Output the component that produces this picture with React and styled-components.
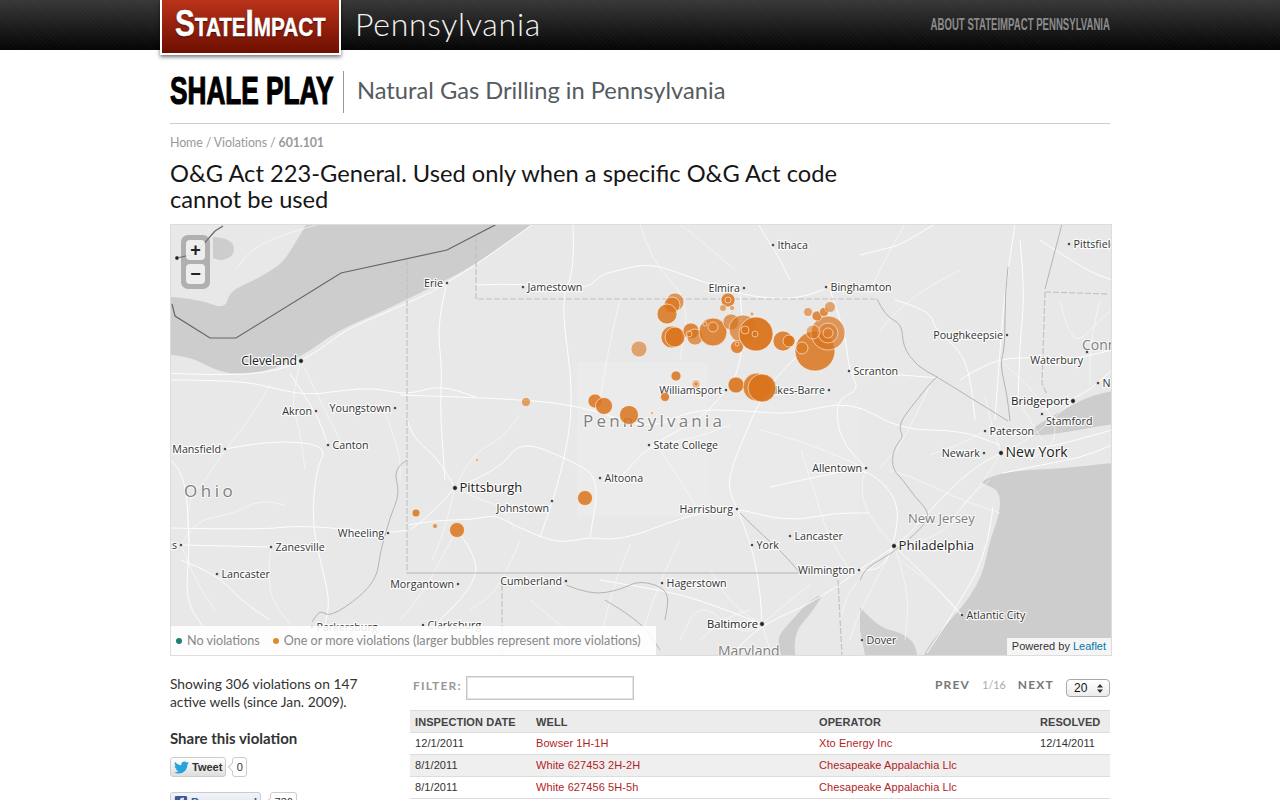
import React from 'react';
import styled, { createGlobalStyle } from 'styled-components';
import { FaTwitter, FaFacebookSquare } from 'react-icons/fa';

const GlobalStyle = createGlobalStyle`
  html, body {
    margin: 0;
    padding: 0;
    background: #fff;
    overflow: hidden;
  }
  body {
    font-family: Lato, "Open Sans", sans-serif;
    color: #333;
  }
  #root {
    height: 800px;
    overflow: hidden;
  }
`;

const TopBar = styled.header`
  height: 50px;
  background-color: #000;
  background-image:
    repeating-linear-gradient(45deg, rgba(255, 255, 255, 0.018) 0 1px, transparent 1px 3px),
    linear-gradient(#383838, #040404);
`;

const TopBarInner = styled.div`
  width: 950px;
  margin-left: 160px;
  display: flex;
  align-items: flex-start;
`;

const Logo = styled.a`
  display: block;
  box-sizing: border-box;
  width: 181px;
  height: 55px;
  border: 2px solid #fff;
  border-top: 0;
  background: linear-gradient(#bb321a, #6d0f00);
  box-shadow: 0 2px 4px rgba(0, 0, 0, 0.55);
  position: relative;
  z-index: 2;
  overflow: hidden;
`;

const LogoText = styled.span`
  display: block;
  margin: 6px 0 0 13px;
  font: bold 36px/36px "Liberation Sans", sans-serif;
  font-variant: small-caps;
  color: #fff;
  white-space: nowrap;
  transform: scaleX(0.825);
  transform-origin: left center;
  -webkit-text-stroke: 0.4px #fff;
  text-shadow: 0 1px 2px rgba(0, 0, 0, 0.6);
`;

const RegionName = styled.div`
  margin: 4px 0 0 14px;
  font: 300 32px/40px Lato, sans-serif;
  color: #f4f4f4;
  letter-spacing: 0.72px;
`;

const AboutLink = styled.a`
  margin: 16px 0 0 auto;
  font: bold 16px/18px "Liberation Sans", sans-serif;
  color: #8c8c8c;
  white-space: nowrap;
  transform: scaleX(0.6);
  transform-origin: right center;
`;

const Page = styled.main`
  width: 940px;
  margin: 0 auto;
`;

const TitleRow = styled.div`
  display: flex;
  align-items: center;
  height: 42px;
  padding: 21px 0 10px;
  border-bottom: 1px solid #ccc;
`;

const ShalePlay = styled.div`
  width: 173px;
  height: 42px;
  border-right: 1px solid #999;
  font: bold 39px/40px "Liberation Sans", sans-serif;
  color: #000;
  -webkit-text-stroke: 1.2px #000;
  white-space: nowrap;
`;

const ShalePlayText = styled.span`
  display: inline-block;
  transform: scaleX(0.672);
  transform-origin: left center;
`;

const Subtitle = styled.div`
  margin: 0 0 4px 13px;
  font: 400 23.7px/30px Lato, sans-serif;
  color: #555b60;
`;

const Breadcrumb = styled.nav`
  margin-top: 11px;
  font: 12.4px/16px Lato, sans-serif;
  letter-spacing: -0.1px;
  color: #999;
  b {
    font-weight: 700;
  }
`;

const Headline = styled.h1`
  margin: 9px 0 12px;
  width: 700px;
  font: 400 23.7px/26px Lato, sans-serif;
  color: #161616;
`;

const MapBox = styled.div`
  position: relative;
  box-sizing: border-box;
  width: 942px;
  height: 432px;
  border: 1px solid #ddd;
  overflow: hidden;
  background: #e8e8e8;
`;

const MapSvg = styled.svg`
  display: block;
  width: 940px;
  height: 430px;
`;

const Water = styled.path`
  fill: #cdcdcd;
`;

const Road = styled.path`
  fill: none;
  stroke: #fff;
  stroke-width: ${(p) => (p.$minor ? 0.7 : 1)};
  stroke-opacity: ${(p) => (p.$minor ? 0.75 : 0.9)};
`;

const Border = styled.path`
  fill: none;
  stroke: ${(p) => p.$color || '#b4b4b4'};
  stroke-width: ${(p) => p.$width || 1};
  stroke-dasharray: ${(p) => p.$dash || 'none'};
`;

const CityDot = styled.circle`
  fill: #222;
  stroke: #fff;
  stroke-width: 0.6;
`;

const CityLabel = styled.text`
  font-family: "Open Sans", sans-serif;
  font-size: ${(p) => p.$size}px;
  fill: ${(p) => (p.$size > 11 ? '#222' : '#333')};
  paint-order: stroke;
  stroke: rgba(255, 255, 255, 0.85);
  stroke-width: 2.4px;
  stroke-linejoin: round;
`;

const AreaLabel = styled.text`
  font-family: "Open Sans", sans-serif;
  font-size: ${(p) => p.$size}px;
  letter-spacing: ${(p) => p.$spacing || 0}px;
  fill: #808080;
  paint-order: stroke;
  stroke: rgba(255, 255, 255, 0.7);
  stroke-width: 2px;
`;

const Bubble = styled.circle`
  fill: #d9741c;
  fill-opacity: ${(p) => p.$fade || 0.85};
  stroke: #fff;
  stroke-opacity: 0.55;
  stroke-width: 1;
`;

const ZoomControl = styled.div`
  position: absolute;
  left: 10px;
  top: 10px;
  display: flex;
  flex-direction: column;
  gap: 4px;
  padding: 5px;
  background: rgba(120, 120, 120, 0.5);
  border-radius: 7px;
`;

const ZoomButton = styled.a`
  display: flex;
  align-items: center;
  justify-content: center;
  width: 19px;
  height: 20px;
  background: rgba(245, 245, 245, 0.9);
  border-radius: 4px;
  color: #222;
  font: bold 18px/18px "Liberation Sans", sans-serif;
`;

const Legend = styled.div`
  position: absolute;
  left: 0;
  bottom: 0;
  box-sizing: border-box;
  width: 485px;
  height: 29px;
  display: flex;
  align-items: center;
  padding-left: 5px;
  background: rgba(255, 255, 255, 0.88);
  font: 12.6px/16px Lato, sans-serif;
  color: #888;
`;

const LegendDot = styled.i`
  width: 6px;
  height: 6px;
  border-radius: 50%;
  margin: 0 5px 0 ${(p) => p.$gap || 0}px;
  background: ${(p) => p.$color};
`;

const Attribution = styled.div`
  position: absolute;
  right: 0;
  bottom: 0;
  height: 17px;
  padding: 0 5px;
  background: rgba(255, 255, 255, 0.8);
  font: 11px/17px "Liberation Sans", sans-serif;
  color: #333;
  a {
    color: #0078a8;
  }
`;

const Lower = styled.div`
  display: flex;
  margin-top: 20px;
`;

const Sidebar = styled.aside`
  width: 240px;
  flex: none;
  margin-top: -1px;
`;

const Summary = styled.p`
  margin: 0;
  width: 200px;
  font: 13.8px/18px Lato, sans-serif;
  color: #333;
`;

const ShareTitle = styled.h3`
  margin: 17px 0 9px;
  font: 700 15px/20px Lato, sans-serif;
  color: #333;
`;

const ShareRow = styled.div`
  display: flex;
  align-items: center;
  margin-bottom: 15px;
`;

const ShareButton = styled.a`
  display: flex;
  align-items: center;
  gap: 3px;
  box-sizing: border-box;
  height: 20px;
  padding: 0 3px;
  border: 1px solid #ccc;
  border-radius: 3px;
  background: ${(p) => (p.$fb ? 'linear-gradient(#f2f4f9, #d9dfea)' : 'linear-gradient(#fff, #dedede)')};
  color: ${(p) => (p.$fb ? '#3b5998' : '#333')};
  font: bold 11px/18px "Liberation Sans", sans-serif;
`;

const ShareCount = styled.span`
  position: relative;
  box-sizing: border-box;
  height: 20px;
  margin-left: ${(p) => p.$gap}px;
  padding: 0 3.5px;
  border: 1px solid #ccc;
  border-radius: 3px;
  background: #fff;
  font: 11px/18px "Liberation Sans", sans-serif;
  color: #333;
  &::before {
    content: '';
    position: absolute;
    left: -4px;
    top: 6px;
    width: 5px;
    height: 5px;
    background: #fff;
    border-left: 1px solid #ccc;
    border-bottom: 1px solid #ccc;
    transform: rotate(45deg);
  }
`;

const Results = styled.section`
  width: 700px;
`;

const ToolRow = styled.div`
  display: flex;
  align-items: flex-start;
  height: 24px;
  margin-bottom: 10px;
`;

const FilterLabel = styled.label`
  margin-left: 3px;
  font: 700 12px/20px Lato, sans-serif;
  letter-spacing: 1.2px;
  color: #999;
`;

const FilterInput = styled.input`
  box-sizing: border-box;
  width: 168px;
  height: 24px;
  margin-left: 4px;
  border: 1px solid #c6c6c6;
  box-shadow: inset 0 0 0 1px #e4e4e4;
  background: #fff;
  outline: 0;
`;

const Pager = styled.div`
  margin: 1px 0 0 auto;
  display: flex;
  align-items: flex-start;
  font: 700 12px/16px Lato, sans-serif;
  letter-spacing: 1.2px;
  color: #777;
`;

const PageCount = styled.span`
  margin: 0 12px;
  font-size: 10.8px;
  font-weight: 400;
  letter-spacing: 0;
  color: #aaa;
`;

const PageSize = styled.div`
  box-sizing: border-box;
  display: flex;
  align-items: center;
  justify-content: space-between;
  width: 44px;
  height: 18px;
  margin: 2px 0 0 12px;
  padding: 0 6px 0 7px;
  border: 1px solid #aaa;
  border-radius: 4px;
  background: linear-gradient(#fff, #ececec);
  font: 12px/16px "Liberation Sans", sans-serif;
  letter-spacing: 0;
  color: #111;
`;

const Table = styled.table`
  width: 700px;
  border-collapse: collapse;
  table-layout: fixed;
  font: 11px/14px "Liberation Sans", sans-serif;
  letter-spacing: 0.08px;
  color: #333;
`;

const Th = styled.th`
  box-sizing: border-box;
  width: ${(p) => p.$w}px;
  height: 22px;
  padding: 0 0 0 5px;
  background: #ececec;
  border-top: 1px solid #ddd;
  border-bottom: 1px solid #ddd;
  text-align: left;
  font-weight: bold;
  color: #444;
`;

const Tr = styled.tr`
  background: ${(p) => (p.$odd ? '#efefef' : '#fff')};
`;

const Td = styled.td`
  box-sizing: border-box;
  height: 22px;
  padding: 0 0 2px 5px;
  border-bottom: 1px solid #ddd;
  a {
    color: #b01e1e;
  }
`;

const WATER = [
  'M321 200 L560 200 L533 224 L510 240 L470 268 L420 293 L383 311 L337 331 L310 351 L280 367 L255 373 L227 374 L203 364 L190 357 L150 352 L150 296 L177 297 L203 301 L225 309 L230 291 L253 281 L277 267 L286 258 L297 240 Z',
  'M213 237 L232 238 L235 255 L222 261 L213 258 Z',
  'M1150 460 L1112 463 L1067 468 L1027 470 L1003 473 L985 479 L980 483 L1000 490 L1000 513 L990 540 L983 573 L970 597 L953 617 L927 647 L920 665 L900 700 L1150 700 Z',
  'M860 607 L877 627 L903 633 L918 647 L917 680 L870 680 L860 630 Z',
  'M1150 385 L1112 391 L1087 397 L1060 412 L1033 427 L1030 437 L1067 432 L1112 424 L1150 420 Z',
  'M818 596 L806 604 L795 617 L783 630 L777 640 L785 670 L797 670 L793 634 L812 612 L822 596 Z',
];

const ROADS = [
  'M150 372 L210 376 L280 372 L320 350 L345 330 L385 313 L430 293 L447 283 L480 262 L533 224',
  'M476 285 L520 283 L555 290 L590 287 L600 275 L620 270 L650 263 L690 277 L740 295 L790 300 L825 290 L835 282',
  'M400 395 L500 398 L580 405 L650 430 L690 410 L740 410 L790 415 L850 400 L900 430 L960 430 L1000 445',
  'M408 525 L437 520 L470 520 L495 515 L510 523 L540 537 L563 543 L590 537 L610 540 L637 535 L667 523 L700 513 L737 508 L767 517 L800 520 L833 513 L870 513',
  'M737 508 L727 490 L733 463 L747 430 L760 400 L790 360 L830 335',
  'M770 487 L833 473 L867 468 L900 500 L894 546 L880 570 L859 570',
  'M859 570 L900 545 L930 510 L970 470 L1001 453',
  'M993 507 L990 533 L977 573 L960 600 L947 623 L927 653',
  'M894 546 L930 580 L962 615',
  'M859 570 L820 600 L762 624 L730 656',
  'M737 508 L752 545 L760 590 L762 624',
  'M600 580 L660 590 L700 600 L762 624',
  'M455 488 L500 470 L520 440 L570 460 L600 478 L590 537',
  'M455 488 L440 460 L415 440 L407 420',
  'M455 488 L430 515 L410 530',
  'M457 530 L480 560 L470 590 L440 620',
  'M225 449 L270 440 L328 445 L316 470 L312 520 L320 560 L330 600 L325 625',
  'M290 374 L316 411 L328 445',
  'M170 460 L185 470 L190 545 L185 600 L205 630',
  'M170 528 L260 530 L300 525 L388 533 L407 530',
  'M181 545 L271 547',
  'M181 560 L217 574 L240 600 L270 620',
  'M170 380 L240 380 L280 390 L310 395 L345 390 L376 388 L407 395 L440 385 L476 397',
  'M447 283 L437 320 L442 370 L440 410 L445 480',
  'M1015 224 L1005 290 L1000 350 L995 420',
  'M1020 240 L1025 290 L1020 340 L1018 400',
  'M1040 240 L1085 270 L1112 280',
  'M860 255 L880 250 L900 245 L925 230 L935 224',
  'M895 300 L930 310 L935 330 L960 350 L970 375 L975 420',
  'M960 380 L990 360 L1030 357 L1070 360 L1112 350',
  'M1042 410 L1070 400 L1090 390 L1112 370',
  'M830 290 L845 330 L849 371 L860 390 L835 400 L840 440 L866 468',
  'M849 371 L900 375 L940 378',
  'M740 295 L745 340 L735 380 L726 390 L700 420 L650 445 L620 478',
  'M1003 473 L1040 465 L1080 458 L1112 445',
  'M1001 453 L1040 450 L1112 430',
  'M758 224 L770 244 L777 254 L790 280',
  'M573 224 L575 270 L560 300 L575 400 L560 480 L540 537',
];

const MINOR_ROADS = [
  'M1000 513 L960 500 L920 480 L890 470',
  'M894 546 L860 610 L850 640',
  'M960 615 L940 590 L900 560',
  'M762 624 L790 600 L810 585',
  'M762 624 L745 640 L700 600 L680 640',
  'M630 545 L615 580 L600 640',
  'M680 540 L660 580 L640 640',
  'M700 513 L680 480 L660 450',
  'M760 430 L800 440 L866 468',
  'M520 540 L500 590 L470 610',
  'M380 400 L400 450 L400 480',
  'M640 224 L650 260 L690 300 L680 360',
  'M1060 300 L1070 350 L1100 320 L1112 310',
  'M905 224 L890 250 L870 290',
  'M1000 360 L1045 400 L1060 440 L1030 460',
  'M301 361 L290 400 L300 430 L305 470',
  'M301 361 L320 400 L340 440',
  'M270 385 L250 420 L225 449 L205 480',
  'M205 480 L185 500 L190 545',
  'M181 545 L195 520 L230 515 L260 500 L285 505',
  'M181 545 L195 580 L215 610',
  'M271 547 L265 590 L290 625',
  'M455 488 L480 500 L500 505 L515 530',
  'M455 488 L470 455 L500 440 L520 415',
  'M457 530 L440 560 L425 590 L400 620',
  'M455 488 L445 530 L432 560',
  'M894 546 L870 520 L860 490 L866 468',
  'M894 546 L910 590 L905 640',
  'M894 546 L940 540 L965 500 L990 480',
  'M880 560 L850 585 L840 620',
  'M1001 453 L985 480 L960 510',
  'M1001 453 L1030 440 L1073 401',
  'M1001 453 L990 420 L985 395',
  'M985 431 L960 445 L930 455',
  'M1018 400 L1030 420 L1042 440',
  'M762 624 L770 650',
  'M762 624 L735 610 L710 570',
  'M700 640 L720 620 L750 610',
  'M530 600 L560 625 L590 650',
  'M801 450 L820 510 L830 540 L850 570',
  'M650 445 L690 440 L730 425',
  'M620 300 L610 340 L600 400',
  'M680 224 L700 240 L735 270',
  'M880 330 L905 300 L960 270',
  'M930 385 L905 440 L880 468',
  'M1100 300 L1090 340 L1090 385',
  'M320 224 L260 240 L235 270',
];

const BORDERS_DASHED = [
  'M407 260 L407 573',
  'M476 237 L476 299 L877 299',
  'M1045 292 L1108 294',
  'M1045 292 L1042 384 L1047 394',
  'M502 577 L502 656',
  'M838 580 L842 656',
];

const BORDERS_THIN = [
  'M407 573 L800 573',
  'M1062 224 L1045 289',
  'M877 299 L885 316 L902 324 L903 347 L917 366 L937 377',
  'M937 377 L1008 421',
  'M937 377 L932 381 L920 396 L898 424 L903 437 L900 440 L892 453 L893 470 L903 480 L915 497 L930 513 L923 527 L893 553 L867 567 L860 580',
  'M407 460 L393 468 L400 493 L390 517 L380 553 L377 577 L360 597 L330 617 L320 610 L312 622',
  'M566 585 L590 595 L620 590 L640 580 L670 590 L665 620',
  'M605 600 L640 620 L660 650',
  'M1008 267 L1005 291 L1005 347 L1000 364 L1007 394 L1010 421',
  'M740 513 L757 530 L783 553 L800 573',
];

const CITIES = [
  ['Ithaca', 773, 245, 'start'],
  ['Pittsfield', 1069, 244, 'start'],
  ['Erie', 447, 283, 'end'],
  ['Jamestown', 523, 287, 'start'],
  ['Elmira', 744, 288, 'end'],
  ['Binghamton', 826, 287, 'start'],
  ['Cleveland', 301, 361, 'end', 12.3],
  ['Akron', 316, 411, 'end'],
  ['Youngstown', 395, 408, 'end'],
  ['Poughkeepsie', 1007, 335, 'end'],
  ['Bridgeport', 1073, 401, 'end', 11.6],
  ['Paterson', 985, 431, 'start'],
  ['Scranton', 849, 371, 'start'],
  ['Williamsport', 726, 390, 'end'],
  ['Wilkes-Barre', 829, 390, 'end'],
  ['State College', 649, 445, 'start'],
  ['Altoona', 600, 478, 'start'],
  ['Allentown', 866, 468, 'end'],
  ['Mansfield', 225, 449, 'end'],
  ['Canton', 328, 445, 'start'],
  ['Pittsburgh', 455, 488, 'start', 13],
  ['Harrisburg', 737, 509, 'end'],
  ['Newark', 984, 453, 'end'],
  ['New York', 1001, 453, 'start', 14],
  ['Zanesville', 271, 547, 'start'],
  ['Wheeling', 388, 533, 'end'],
  ['Lancaster', 217, 574, 'start'],
  ['Columbus', 181, 545, 'end'],
  ['Morgantown', 458, 584, 'end'],
  ['Cumberland', 566, 581, 'end'],
  ['Hagerstown', 662, 583, 'start'],
  ['York', 752, 545, 'start'],
  ['Lancaster', 790, 536, 'start'],
  ['Wilmington', 859, 570, 'end'],
  ['Philadelphia', 894, 546, 'start', 13.2],
  ['Baltimore', 762, 624, 'end', 11.2],
  ['Dover', 862, 640, 'start'],
  ['Atlantic City', 962, 615, 'start'],
  ['Parkersburg', 312, 627, 'start'],
  ['Clarksburg', 423, 625, 'start'],
  ['New Haven', 1098, 383, 'start'],
];

// label sits off its dot: text x, baseline y, dot x, dot y
const OFFSET_CITIES = [
  ['Waterbury', 1083, 364, 1087, 352, 'end'],
  ['Stamford', 1046, 425, 1042, 414, 'start'],
  ['Johnstown', 549, 512, 552, 501, 'end'],
];

const BUBBLES = [
  [675, 302, 9, 0.7], [672, 305, 8, 0.7], [667, 314, 10],
  [728, 300, 7], [728, 300, 3, 0.4], [723, 308, 3.5, 0.6], [732, 308, 2.5, 0.6],
  [639, 349, 8, 0.6],
  [672, 337, 11], [675, 337, 10],
  [691, 331, 8], [695, 337, 8, 0.7], [689, 334, 3, 0.5],
  [713, 332, 14], [713, 327, 5, 0.4], [705, 324, 2, 0.4],
  [731, 322, 8, 0.7], [743, 329, 14, 0.7], [737, 347, 6.5], [737, 344, 2, 0.4],
  [756, 334, 17, 0.95], [745, 330, 4, 0.4], [755, 334, 3, 0.4], [752, 314, 2, 0.6],
  [783, 341, 10], [789, 341, 6, 0.95],
  [815, 351, 20], [802, 348, 6, 0.5],
  [828, 333, 17, 0.7], [828, 333, 10, 0.45], [828, 333, 5, 0.4], [813, 332, 7, 0.5],
  [808, 312, 4.5, 0.6], [817, 316, 5, 0.8], [824, 312, 4.5, 0.8], [830, 307, 5.5, 0.6],
  [676, 376, 5], [696, 384, 4, 0.6], [696, 384, 2],
  [665, 397, 4.5],
  [736, 385, 8, 0.9],
  [757, 387, 14], [762, 388, 14, 0.95],
  [595, 401, 7], [604, 406, 8.5],
  [629, 415, 9.5], [652, 413, 1.5, 0.6],
  [526, 402, 4.5, 0.65],
  [585, 498, 7.5],
  [416, 513, 4], [435, 526, 2.5, 0.7], [457, 530, 7.5], [477, 460, 1.5, 0.6],
];

const coordsByCity = (city) => {
  const [name, x, y, anchor, size = 10.7] = city;
  const textX = anchor === 'start' ? x + 4.5 : x - 4;
  return { name, x, y, anchor, size, textX };
};

// rounds the corners of a hand-traced polyline so roads and shores don't look ruled
const smooth = (d) => {
  const pts = [...d.matchAll(/(-?[\d.]+) (-?[\d.]+)/g)].map((m) => [+m[1], +m[2]]);
  let out = `M${pts[0][0]} ${pts[0][1]}`;
  for (let i = 1; i < pts.length - 1; i++) {
    const mx = (pts[i][0] + pts[i + 1][0]) / 2;
    const my = (pts[i][1] + pts[i + 1][1]) / 2;
    out += ` Q${pts[i][0]} ${pts[i][1]} ${mx} ${my}`;
  }
  const last = pts[pts.length - 1];
  return `${out} L${last[0]} ${last[1]}${d.endsWith('Z') ? ' Z' : ''}`;
};

const MapDrawing = () => (
  <MapSvg viewBox="171 225 940 430">
    <rect x="577" y="362" width="131" height="155" fill="#ebebeb" />
    <path d="M708 400 L860 400 L860 520 L708 520 Z" fill="#eaeaea" />
    {WATER.map((d) => <Water key={d} d={smooth(d)} />)}
    {MINOR_ROADS.map((d) => <Road key={d} d={smooth(d)} $minor />)}
    {ROADS.map((d) => <Road key={d} d={smooth(d)} />)}
    {BORDERS_DASHED.map((d) => <Border key={d} d={d} $dash="6 2" $width={1.2} $color="#c2c2c2" />)}
    {BORDERS_THIN.map((d) => <Border key={d} d={smooth(d)} />)}
    <Border d="M223 226 L215 231 L195 254 L177 258" $color="#666" $width={1.2} />
    <Border d="M172 304 L175 316 L210 338 L236 338 L341 273 L447 250 L497 224" $color="#666" $width={1.2} />
    <CityDot cx="177" cy="258" r="2.2" />
    <AreaLabel x="184" y="497" $size={17} $spacing={3.5}>Ohio</AreaLabel>
    <AreaLabel x="583" y="427" $size={17} $spacing={3.2}>Pennsylvania</AreaLabel>
    <AreaLabel x="908" y="523" $size={13}>New Jersey</AreaLabel>
    <AreaLabel x="718" y="656" $size={14}>Maryland</AreaLabel>
    <AreaLabel x="1082" y="350" $size={14}>Connecticut</AreaLabel>
    {CITIES.map(coordsByCity).map((c) => (
      <g key={c.name + c.x}>
        <CityDot cx={c.x} cy={c.y} r={c.size > 11 ? 2.4 : 1.5} />
        <CityLabel x={c.textX} y={c.y + 4} textAnchor={c.anchor} $size={c.size}>{c.name}</CityLabel>
      </g>
    ))}
    {OFFSET_CITIES.map(([name, tx, ty, dx, dy, anchor]) => (
      <g key={name}>
        <CityDot cx={dx} cy={dy} r="1.5" />
        <CityLabel x={tx} y={ty} textAnchor={anchor} $size={10.7}>{name}</CityLabel>
      </g>
    ))}
    {BUBBLES.map(([cx, cy, r, fade], i) => (
      <Bubble key={i} cx={cx} cy={cy} r={r} $fade={fade} />
    ))}
  </MapSvg>
);

const ROWS = [
  ['12/1/2011', 'Bowser 1H-1H', 'Xto Energy Inc', '12/14/2011'],
  ['8/1/2011', 'White 627453 2H-2H', 'Chesapeake Appalachia Llc', ''],
  ['8/1/2011', 'White 627456 5H-5h', 'Chesapeake Appalachia Llc', ''],
];

const App = () => (
  <>
    <GlobalStyle />
    <TopBar>
      <TopBarInner>
        <Logo><LogoText>StateImpact</LogoText></Logo>
        <RegionName>Pennsylvania</RegionName>
        <AboutLink>ABOUT STATEIMPACT PENNSYLVANIA</AboutLink>
      </TopBarInner>
    </TopBar>
    <Page>
      <TitleRow>
        <ShalePlay><ShalePlayText>SHALE PLAY</ShalePlayText></ShalePlay>
        <Subtitle>Natural Gas Drilling in Pennsylvania</Subtitle>
      </TitleRow>
      <Breadcrumb>Home / Violations / <b>601.101</b></Breadcrumb>
      <Headline>O&amp;G Act 223-General. Used only when a specific O&amp;G Act code cannot be used</Headline>
      <MapBox>
        <MapDrawing />
        <ZoomControl>
          <ZoomButton>+</ZoomButton>
          <ZoomButton>−</ZoomButton>
        </ZoomControl>
        <Legend>
          <LegendDot $color="#1d7f77" />
          No violations
          <LegendDot $color="#e08a2e" $gap={13} />
          One or more violations (larger bubbles represent more violations)
        </Legend>
        <Attribution>Powered by <a>Leaflet</a></Attribution>
      </MapBox>
      <Lower>
        <Sidebar>
          <Summary>Showing 306 violations on 147 active wells (since Jan. 2009).</Summary>
          <ShareTitle>Share this violation</ShareTitle>
          <ShareRow>
            <ShareButton><FaTwitter size={15} color="#2aa3dd" /> Tweet</ShareButton>
            <ShareCount $gap={6}>0</ShareCount>
          </ShareRow>
          <ShareRow>
            <ShareButton $fb><FaFacebookSquare size={14} color="#3b5998" /> Recommend</ShareButton>
            <ShareCount $gap={9}>736</ShareCount>
          </ShareRow>
        </Sidebar>
        <Results>
          <ToolRow>
            <FilterLabel>FILTER:</FilterLabel>
            <FilterInput />
            <Pager>
              PREV
              <PageCount>1/16</PageCount>
              NEXT
              <PageSize>
                20
                <svg width="6" height="9" viewBox="0 0 6 9"><path d="M3 0 L6 3.5 H0 Z M3 9 L0 5.5 H6 Z" fill="#333" /></svg>
              </PageSize>
            </Pager>
          </ToolRow>
          <Table>
            <thead>
              <tr>
                <Th $w={121}>INSPECTION DATE</Th>
                <Th $w={283}>WELL</Th>
                <Th $w={221}>OPERATOR</Th>
                <Th $w={75}>RESOLVED</Th>
              </tr>
            </thead>
            <tbody>
              {ROWS.map((row, i) => (
                <Tr key={row[1]} $odd={i % 2 === 1}>
                  <Td>{row[0]}</Td>
                  <Td><a>{row[1]}</a></Td>
                  <Td><a>{row[2]}</a></Td>
                  <Td>{row[3]}</Td>
                </Tr>
              ))}
            </tbody>
          </Table>
        </Results>
      </Lower>
    </Page>
  </>
);

export default App;
